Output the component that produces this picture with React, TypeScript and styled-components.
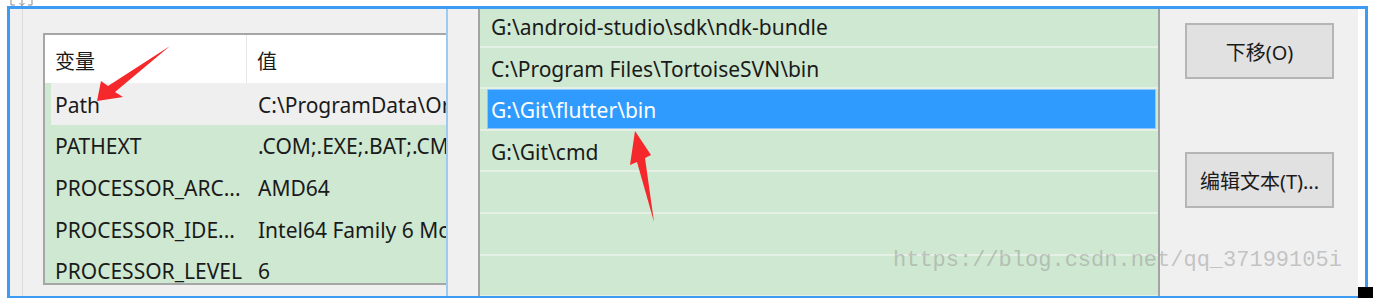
import React from "react";
import styled, { createGlobalStyle } from "styled-components";

const GlobalStyle = createGlobalStyle`
  body {
    margin: 0;
    background: #fff;
    font-family: "Noto Sans", "Noto Sans CJK SC", sans-serif;
    color: #1a1a1a;
  }
`;

const GREEN = "#cfe8d1";

const Page = styled.div`
  position: relative;
  width: 1374px;
  height: 298px;
  overflow: hidden;
  background: #fff;
`;

const TopStrip = styled.div`
  height: 6px;
  padding-left: 10px;
  display: flex;
  align-items: flex-end;
`;

const Frame = styled.div`
  margin-left: 7px;
  width: 1361px;
  height: 292px;
  box-sizing: border-box;
  border: 3px solid #3d9cf2;
  border-bottom-width: 2px;
  padding-right: 7px;
  background: #fff;
  display: flex;
`;

/* left window: environment variables */
const LeftPanel = styled.div`
  width: 436px;
  flex-shrink: 0;
  background: #f0f0f0;
  overflow: hidden;
  display: flex;
`;

const Rail = styled.div`
  margin-left: 12px;
  border-left: 1px solid #dcdcdc;
  padding: 24px 0 0 20px;
  display: flex;
`;

const VarList = styled.div`
  width: 420px;
  height: 252px;
  box-sizing: border-box;
  border: 2px solid #a6a6a6;
  border-right: none;
  background: ${GREEN};
  overflow: hidden;
  flex-shrink: 0;
`;

const VarHeader = styled.div`
  height: 48px;
  background: #fff;
  display: grid;
  grid-template-columns: 202px 1fr;
`;

const HeadCell = styled.div<{ $divider?: boolean }>`
  padding: 2px 0 0 10px;
  display: flex;
  align-items: center;
  font-size: 20px;
  border-right: ${(p) => (p.$divider ? "1px solid #e6e6e6" : "none")};
`;

const VarRow = styled.div<{ $selected?: boolean }>`
  height: 41.6px;
  padding-top: 2px;
  box-sizing: border-box;
  display: grid;
  grid-template-columns: 202px 1fr;
  align-items: center;
  font-size: 21px;
  white-space: nowrap;
  background: ${(p) =>
    p.$selected
      ? `linear-gradient(to right, ${GREEN} 6px, #efefef 6px)`
      : GREEN};
`;

const VarCell = styled.div<{ $first?: boolean }>`
  padding-left: ${(p) => (p.$first ? "10px" : "11px")};
  overflow: hidden;
`;

/* right window: path editor */
const RightPanel = styled.div`
  flex: 1;
  background: #f0f0f0;
  border-left: 2px solid #9ccbf2;
  display: flex;
`;

const Gutter = styled.div`
  width: 30px;
  flex-shrink: 0;
`;

const PathList = styled.div`
  width: 682px;
  flex-shrink: 0;
  box-sizing: border-box;
  border-left: 2px solid #a3a3a3;
  border-right: 2px solid #a3a3a3;
  background: ${GREEN};
  overflow: hidden;
`;

const PathRows = styled.div`
  margin-top: -3px;
`;

const PathRow = styled.div`
  height: 41.6px;
  box-sizing: border-box;
  border-bottom: 2px solid #e4f0e4;
  padding: 0 2px 0 7px;
  display: flex;
`;

const PathItem = styled.div<{ $selected?: boolean }>`
  flex: 1;
  display: flex;
  align-items: center;
  padding: 3px 0 0 3px;
  font-size: 21px;
  white-space: nowrap;
  box-sizing: border-box;
  background: ${(p) => (p.$selected ? "#2f9bff" : "transparent")};
  border: 1px solid ${(p) => (p.$selected ? "#8fc6ff" : "transparent")};
  color: ${(p) => (p.$selected ? "#fff" : "#1a1a1a")};
`;

const ButtonColumn = styled.div`
  flex: 1;
  padding: 14px 0 0 25px;
  display: flex;
  flex-direction: column;
  gap: 73px;
`;

const Button = styled.div`
  width: 149px;
  height: 56px;
  box-sizing: border-box;
  background: #e1e1e1;
  border: 2px solid #b5b5b5;
  display: flex;
  align-items: center;
  justify-content: center;
  font-size: 20px;
`;

/* overlays */
const Arrows = styled.svg`
  position: absolute;
  left: 0;
  top: 0;
  pointer-events: none;
`;

const Watermark = styled.div`
  position: absolute;
  left: 893px;
  top: 248px;
  font-family: "Liberation Mono", monospace;
  font-size: 22px;
  color: rgba(150, 150, 150, 0.5);
  white-space: nowrap;
  pointer-events: none;
`;

const CornerBlock = styled.div`
  position: absolute;
  left: 1358px;
  top: 287px;
  width: 15px;
  height: 11px;
  background: #000;
`;

const vars = [
  { name: "Path", value: "C:\\ProgramData\\Or", selected: true },
  { name: "PATHEXT", value: ".COM;.EXE;.BAT;.CM" },
  { name: "PROCESSOR_ARC...", value: "AMD64" },
  { name: "PROCESSOR_IDE...", value: "Intel64 Family 6 Mo" },
  { name: "PROCESSOR_LEVEL", value: "6" },
];

const paths = [
  "G:\\android-studio\\sdk\\ndk-bundle",
  "C:\\Program Files\\TortoiseSVN\\bin",
  "G:\\Git\\flutter\\bin",
  "G:\\Git\\cmd",
  "",
  "",
  "",
];

export default function App() {
  return (
    <Page>
      <GlobalStyle />
      <TopStrip>
        <svg width="24" height="6" viewBox="0 0 24 6">
          <path
            d="M1 0 V5 H5 M22 0 V5 H18 M12 0 V6 M9.5 3 L12 5.5 L14.5 3"
            fill="none"
            stroke="#8a8a8a"
            strokeWidth="1"
          />
        </svg>
      </TopStrip>
      <Frame>
        <LeftPanel>
          <Rail>
            <VarList>
              <VarHeader>
                <HeadCell $divider>变量</HeadCell>
                <HeadCell>值</HeadCell>
              </VarHeader>
              {vars.map((v) => (
                <VarRow key={v.name} $selected={v.selected}>
                  <VarCell $first>{v.name}</VarCell>
                  <VarCell>{v.value}</VarCell>
                </VarRow>
              ))}
            </VarList>
          </Rail>
        </LeftPanel>
        <RightPanel>
          <Gutter />
          <PathList>
            <PathRows>
              {paths.map((p, i) => (
                <PathRow key={i}>
                  <PathItem $selected={i === 2}>{p}</PathItem>
                </PathRow>
              ))}
            </PathRows>
          </PathList>
          <ButtonColumn>
            <Button>下移(O)</Button>
            <Button>编辑文本(T)...</Button>
          </ButtonColumn>
        </RightPanel>
      </Frame>
      <Watermark>https://blog.csdn.net/qq_37199105i</Watermark>
      <CornerBlock />
      <Arrows width="1374" height="298" viewBox="0 0 1374 298">
        <polygon
          points="97,101 101,81 108,86 170,46 115,92 123,97"
          fill="#f5282b"
        />
        <polygon
          points="635,131 651,155 645,158 654,222 637,162 630,165"
          fill="#f5282b"
        />
      </Arrows>
    </Page>
  );
}
